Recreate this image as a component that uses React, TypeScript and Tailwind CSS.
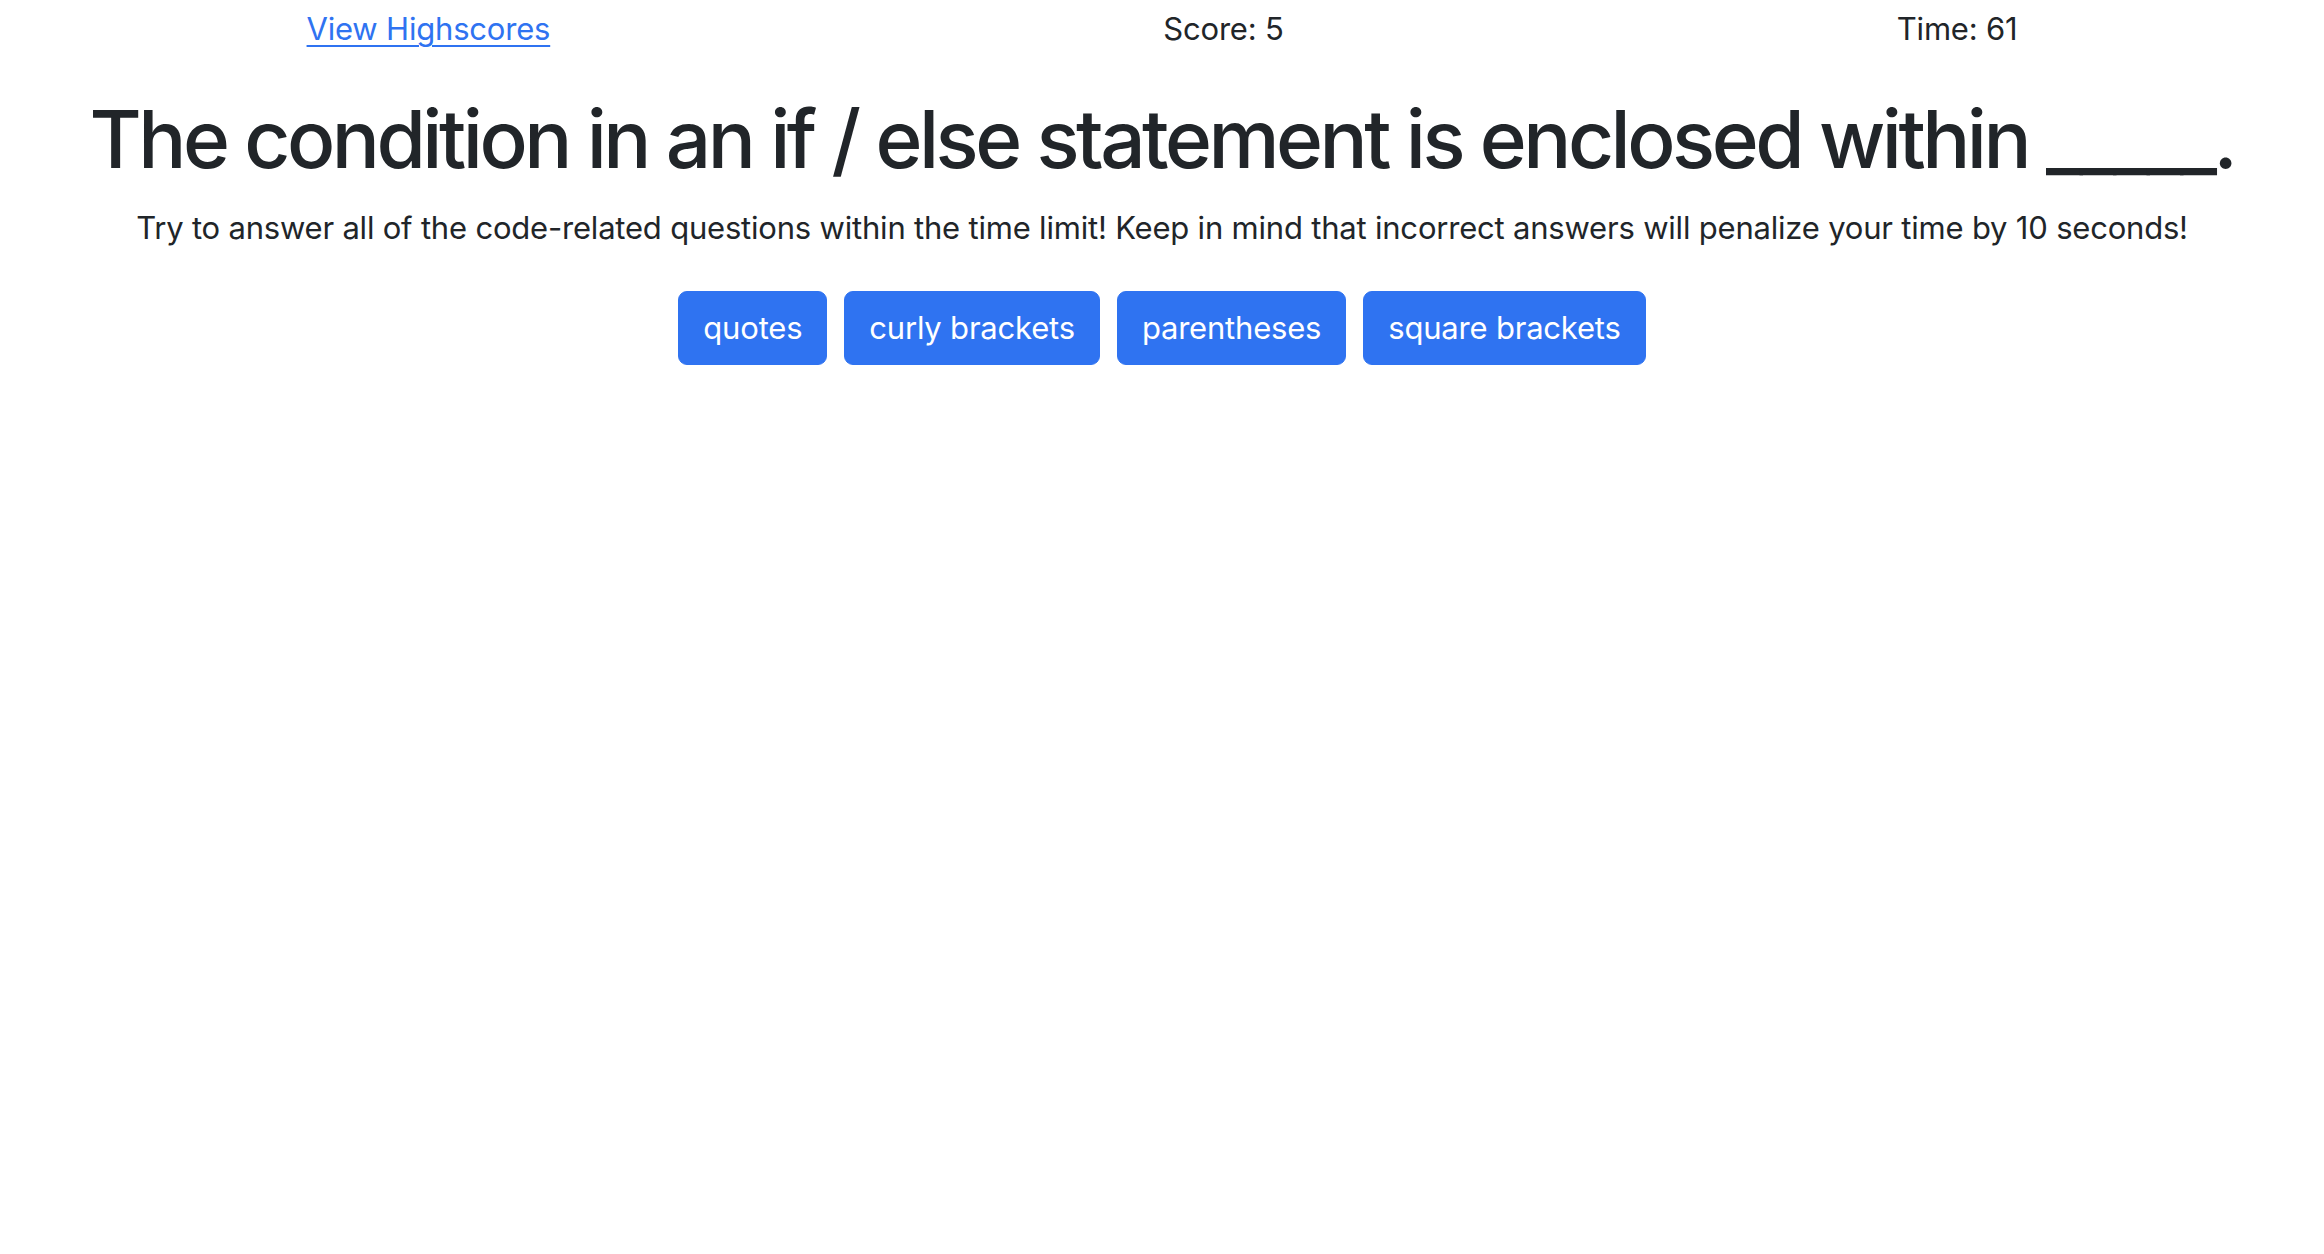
const answers = ["quotes", "curly brackets", "parentheses", "square brackets"]

export default function App() {
  return (
    <div className="min-h-screen bg-white text-[#212529] font-['Inter',sans-serif] text-[31px] leading-[46px]">
      <header className="flex justify-around pt-[6px] tracking-[-0.2px]">
        <a href="#" className="text-[#2f73f1] underline underline-offset-[5px] decoration-[2px]">
          View Highscores
        </a>
        <span>Score: 5</span>
        <span>Time: 61</span>
      </header>

      <main className="text-center">
        <h1 className="mt-[39px] mb-[18px] text-[80px] leading-[96px] font-medium tracking-[-3.5px]">
          The condition in an if / else statement is enclosed within _____.
        </h1>
        <p className="mb-[40px] tracking-[-0.2px]">
          Try to answer all of the code-related questions within the time limit! Keep in mind that incorrect
          answers will penalize your time by 10 seconds!
        </p>
        <div className="flex justify-center gap-[17px]">
          {answers.map((answer) => (
            <button
              key={answer}
              className="bg-[#2f73f1] text-white border border-[#2f73f1] rounded-[9px] px-[24px] py-[12px] leading-[48px] tracking-[-0.2px]"
            >
              {answer}
            </button>
          ))}
        </div>
      </main>
    </div>
  )
}
